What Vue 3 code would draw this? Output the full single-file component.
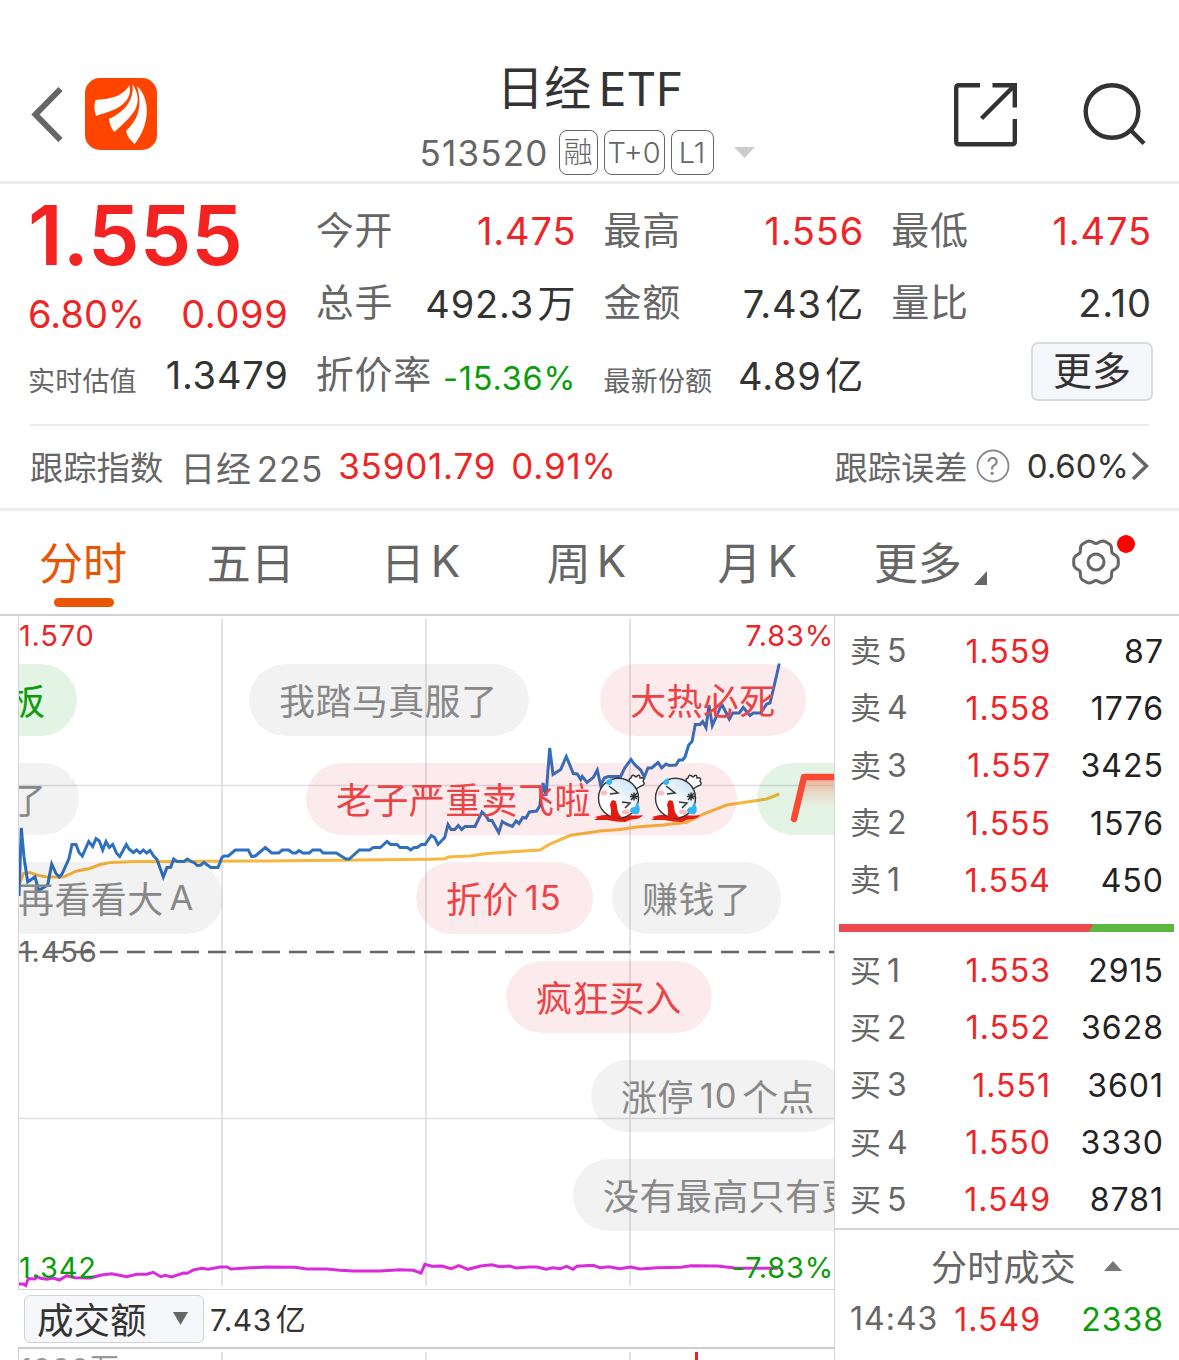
<template>
    <div class="page">
        <!-- Title bar -->
        <header class="header">
            <div class="header-left">
                <svg class="back" width="34" height="56" viewBox="0 0 34 56">
                    <path d="M30.500 3 L5.500 28.500 L30.500 54" fill="none" stroke="#666" stroke-width="6" />
                </svg>
                <svg class="logo" width="72" height="72" viewBox="0 0 72 72">
                    <rect width="72" height="72" rx="15" fill="#ff4400" />
                    <g fill="#fff">
                        <path d="M10.5 22 C24 21 38 19 44.3 7 C46 15 44 20 40 24 C33 32 22 34 11 38 C9 32 9 27 10.5 22 Z" />
                        <path d="M47.5 6 C54 16 54 24 50 32 C45 40 36 48 29.3 54 C26 50 24.5 46 24 41 C34 36 50 26 47.5 6 Z" />
                        <path d="M52 8 C66 21 65 47 49.7 66 C45 62 42 58 41 53 C55 40 57 26 52 8 Z" />
                    </g>
                </svg>
            </div>
            <div class="header-title">
                <h1><span class="name">日经</span><span>ETF</span></h1>
                <div class="code-line">
                    <span class="code">513520</span>
                    <span v-for="tag in tags" :key="tag.text" class="tag" :class="tag.kind">{{ tag.text }}</span>
                    <svg class="code-arrow" width="21" height="11" viewBox="0 0 21 11">
                        <path d="M0 0 H21 L10.500 11 Z" fill="#ccc" />
                    </svg>
                </div>
            </div>
            <div class="header-right">
                <svg width="64" height="64" viewBox="0 0 64 64" fill="none" stroke="#333" stroke-width="4.400">
                    <path d="M26 2.200 H5 Q2.200 2.200 2.200 5 V58.500 Q2.200 61.300 5 61.300 H58 Q60.800 61.300 60.800 58.500 V36" />
                    <path d="M38.500 2.200 H60.800 V24.500 M60 3 L27.500 35.500" />
                </svg>
                <svg width="64" height="64" viewBox="0 0 64 64" fill="none" stroke="#333" stroke-width="4.400">
                    <circle cx="29" cy="28.500" r="26.300" />
                    <path d="M47.500 47 L61 60.500" />
                </svg>
            </div>
        </header>

        <!-- Quote figures -->
        <section class="quote">
            <div class="quote-main">
                <div class="price">1.555</div>
                <div class="change"><span>6.80%</span><span class="amount-change">0.099</span></div>
                <div class="cell estimate"><span class="label small">实时估值</span><span class="value">1.3479</span></div>
            </div>
            <div v-for="(column, index) in quoteColumns" :key="index" class="quote-column">
                <div v-for="item in column" :key="item.label" class="cell">
                    <span class="label" :class="{ small: item.smallLabel }">{{ item.label }}</span>
                    <span class="value" :class="item.tone">{{ item.value }}<i v-if="item.unit">{{ item.unit }}</i></span>
                </div>
                <button v-if="index === 2" class="more">更多</button>
            </div>
        </section>

        <!-- Tracked index -->
        <section class="tracking">
            <span class="track-label">跟踪指数</span>
            <span class="track-name">日经<i>225</i></span>
            <span class="track-value">35901.79</span>
            <span class="track-value percent">0.91%</span>
            <span class="track-label error">跟踪误差</span>
            <svg class="help" width="34" height="34" viewBox="0 0 34 34">
                <circle cx="17" cy="17" r="15.500" fill="none" stroke="#888" stroke-width="1.800" />
                <text x="17" y="25.500" text-anchor="middle" font-size="24" fill="#888">?</text>
            </svg>
            <span class="track-error">0.60%</span>
            <svg class="chevron" width="18" height="30" viewBox="0 0 18 30">
                <path d="M2 2 L15.500 15 L2 28" fill="none" stroke="#666" stroke-width="3.600" />
            </svg>
        </section>

        <!-- Period tabs -->
        <nav class="tabs">
            <button v-for="(tab, index) in tabs" :key="tab.text" :class="{ active: index === current }"
                @click="current = index">
                {{ tab.text }}<i v-if="tab.latin">{{ tab.latin }}</i>
                <svg v-if="tab.menu" class="corner" width="13" height="14" viewBox="0 0 13 14">
                    <path d="M13 0 V14 H0 Z" fill="#666" />
                </svg>
            </button>
            <button aria-label="设置">
                <span class="gear">
                    <svg width="52" height="52" viewBox="-26 -26 52 52" fill="none" stroke="#666" stroke-width="3">
                        <path :d="gearPath" />
                        <circle r="8" />
                    </svg>
                    <span class="dot"></span>
                </span>
            </button>
        </nav>

        <main class="body">
            <div class="charts">
                <div class="chart">
                    <svg width="815" height="673" viewBox="19 616 815 673" fill="none">
                        <g stroke="#dedee4" stroke-width="1.700">
                            <path d="M222 619 V1286 M426 619 V1286 M630 619 V1286" />
                            <path d="M19 785.500 H834 M19 1118.500 H834" />
                        </g>
                        <path d="M19 952 H834" stroke="#666" stroke-width="2.700" stroke-dasharray="18 9" />
                        <polyline :points="averageLine" stroke="#f7b63c" stroke-width="3" />
                        <polyline :points="priceLine" stroke="#2f6fbf" stroke-width="3" />
                        <polyline :points="premiumLine" stroke="#d92bdc" stroke-width="3" />
                    </svg>
                    <span class="axis top left">1.570</span>
                    <span class="axis top right">7.83%</span>
                    <span class="axis middle left">1.456</span>
                    <span class="axis bottom left">1.342</span>
                    <span class="axis bottom right">-7.83%</span>

                    <!-- Floating comments -->
                    <div v-for="item in comments" :key="item.text" class="comment" :class="item.tone"
                        :style="{ left: item.x + 'px', top: item.row * 99 + 48 + 'px', width: item.width + 'px' }">
                        <span>{{ item.text }}</span><i v-if="item.latin">{{ item.latin }}</i><span v-if="item.tail">{{
                            item.tail }}</span>
                        <svg v-for="n in item.faces || 0" :key="n" class="face" width="57" height="50"
                            viewBox="0 0 57 50">
                            <path d="M3 44 Q12 41 20 42 L36 42 Q44 43 51 42 Q49 45 44 46 Q38 46 33 49 Q24 49 15 47 L2 47 Q7 45 3 44 Z"
                                fill="#e51b10" />
                            <g fill="#fff" stroke="#333" stroke-width="1.400">
                                <path d="M39 11 Q35 6 39 5 Q40 0 44 4 Q48 0 48 5 Q53 4 51 8 Q54 12 49 13 L44 16" />
                                <circle cx="26.500" cy="25.200" r="20" fill="url(#skin)" />
                            </g>
                            <ellipse cx="12" cy="20" rx="3.500" ry="2.500" fill="#f9bfc0" />
                            <ellipse cx="34" cy="39" rx="4" ry="2.500" fill="#f9bfc0" />
                            <path d="M17 13 L26 20 L18 21 M30 29 L38 30 L33 35 M39 21 L45 26 M45 20 L39 27 M38 23.500 H46 M42 19.500 V27.500"
                                fill="none" stroke="#333" stroke-width="1.500" />
                            <path d="M18 32 Q19 25 24 28.500 L25 33 Q25 41 31 45 L18 46 Q20 38 18 32 Z" fill="#e51b10" />
                            <path d="M19 5 Q22 10 18 12 Q13 12 14 8 Z M45 29 Q50 37 46 41 Q40 42 38 38 Q38 34 43 34 Z"
                                fill="#35b4f0" />
                        </svg>
                        <svg v-if="item.sign" width="60" height="56" viewBox="0 0 60 56">
                            <path d="M15 8 H60 V36 L15 40 Z" fill="url(#glow)" />
                            <path d="M7 49 L17 7 H60" fill="none" stroke="#fa4a33" stroke-width="6.500"
                                stroke-linecap="round" stroke-linejoin="round" />
                        </svg>
                    </div>
                    <svg class="defs" width="0" height="0">
                        <defs>
                            <linearGradient id="skin" x1="0.900" y1="0" x2="0.450" y2="0.600">
                                <stop offset="0" stop-color="#c2dff2" />
                                <stop offset="1" stop-color="#fff" />
                            </linearGradient>
                            <linearGradient id="glow" x1="0" y1="0" x2="0" y2="1">
                                <stop offset="0" stop-color="#f08a70" stop-opacity="0.700" />
                                <stop offset="1" stop-color="#f0d0b8" stop-opacity="0" />
                            </linearGradient>
                        </defs>
                    </svg>
                </div>
                <div class="indicator">
                    <button class="select">成交额
                        <svg width="15" height="13" viewBox="0 0 15 13">
                            <path d="M0 0 H15 L7.500 13 Z" fill="#666" />
                        </svg>
                    </button>
                    <span class="amount">7.43<i>亿</i></span>
                </div>
                <div class="volume">
                    <svg width="815" height="11" viewBox="19 1349 815 11">
                        <path d="M222 1352 V1360 M426 1352 V1360 M630 1352 V1360" stroke="#dedee4" stroke-width="1.700" />
                        <path d="M696.500 1352 V1360" stroke="#ee2222" stroke-width="3" />
                    </svg>
                    <span class="axis volume-label">1000<i>万</i></span>
                </div>
            </div>

            <!-- Order book -->
            <aside class="book">
                <div class="levels">
                    <div v-for="row in asks" :key="row[0]" class="level">
                        <span class="side">卖<i>{{ row[0] }}</i></span>
                        <span class="level-price">{{ row[1] }}</span>
                        <span class="lots">{{ row[2] }}</span>
                    </div>
                </div>
                <div class="ratio">
                    <span class="ratio-sell"></span>
                </div>
                <div class="levels">
                    <div v-for="row in bids" :key="row[0]" class="level">
                        <span class="side">买<i>{{ row[0] }}</i></span>
                        <span class="level-price">{{ row[1] }}</span>
                        <span class="lots">{{ row[2] }}</span>
                    </div>
                </div>
                <div class="deals">
                    <div class="deals-title">分时成交
                        <svg width="18" height="10" viewBox="0 0 18 10">
                            <path d="M0 10 L9 0 L18 10 Z" fill="#777" />
                        </svg>
                    </div>
                    <div class="level deal">
                        <span class="side">14:43</span>
                        <span class="level-price">1.549</span>
                        <span class="lots green">2338</span>
                    </div>
                </div>
            </aside>
        </main>
    </div>
</template>

<script setup>
import { ref } from 'vue'

const current = ref(0)

const tags = [
    { text: '融', kind: 'cjk' },
    { text: 'T+0', kind: 'wide' },
    { text: 'L1', kind: 'narrow' }
]

const quoteColumns = [
    [
        { label: '今开', value: '1.475', tone: 'red' },
        { label: '总手', value: '492.3', unit: '万' },
        { label: '折价率', value: '-15.36%', tone: 'green compact' }
    ],
    [
        { label: '最高', value: '1.556', tone: 'red' },
        { label: '金额', value: '7.43', unit: '亿' },
        { label: '最新份额', value: '4.89', unit: '亿', smallLabel: true }
    ],
    [
        { label: '最低', value: '1.475', tone: 'red' },
        { label: '量比', value: '2.10' }
    ]
]

const tabs = [
    { text: '分时' },
    { text: '五日' },
    { text: '日', latin: 'K' },
    { text: '周', latin: 'K' },
    { text: '月', latin: 'K' },
    { text: '更多', menu: true }
]

// x is relative to the left edge of the plot
const comments = [
    { text: '板', x: -40, row: 0, width: 98, tone: 'green-tone' },
    { text: '我踏马真服了', x: 230, row: 0, width: 280 },
    { text: '大热必死', x: 581, row: 0, width: 206, tone: 'red-tone' },
    { text: '了', x: -39, row: 1, width: 99 },
    { text: '老子严重卖飞啦', x: 287, row: 1, width: 431, tone: 'red-tone', faces: 2 },
    { text: '', x: 738, row: 1, width: 200, tone: 'green-tone', sign: true },
    { text: '再看看大', latin: 'A', x: -31, row: 2, width: 235 },
    { text: '折价', latin: '15', x: 397, row: 2, width: 177, tone: 'red-tone' },
    { text: '赚钱了', x: 593, row: 2, width: 169 },
    { text: '疯狂买入', x: 487, row: 3, width: 206, tone: 'red-tone' },
    { text: '涨停', latin: '10', tail: '个点', x: 572, row: 4, width: 252 },
    { text: '没有最高只有更高', x: 554, row: 5, width: 350 }
]

const asks = [
    [5, '1.559', 87],
    [4, '1.558', 1776],
    [3, '1.557', 3425],
    [2, '1.555', 1576],
    [1, '1.554', 450]
]

const bids = [
    [1, '1.553', 2915],
    [2, '1.552', 3628],
    [3, '1.551', 3601],
    [4, '1.550', 3330],
    [5, '1.549', 8781]
]

const priceLine = `19,896 21.3,828 24,857 27.7,882 35,877 38.7,890.5 47.7,885 51.7,864 56,873.5 59.3,877 62,874 69,858.5
72,844.5 76,844.5 79,852.5 82.3,856 88.7,841.5 92.7,846.5 96,838.5 99.3,841 102.7,850 106,841.5 109.3,847.5
112.7,844.5 116.7,853.5 119.7,856.5 126.3,844.5 129,849 133.3,852.5 136.7,850 140,853 143.3,850 146.7,853 150,850.5
153.7,856 157,859.5 163.3,877 167,867.5 170.7,867.3 173.7,859 177,861.5 184,861.5 187.3,859 191,861.5 194,862.5
197.3,865.5 200.7,865 204,862.5 210.7,867.5 218,867.5 222,857.5 224,856 228.3,856 235.3,850 248.3,850 251.7,856.5
255.3,856 265.3,847.5 271.7,853 278.7,853 282.3,850 288.7,850 292.7,853 296,853 299,850.5 302.7,853 309.3,853
312.7,850 320,850 323.3,853 336.3,853 346,859 349.3,859 359.3,850 369.7,850 373.3,847.5 380.3,847.5 387,841.5
390.7,844.5 397,844.5 400,847.5 407.3,847.5 410.7,850 414,847.5 417.3,847.5 421.3,844.5 425,844.5 431.3,835.5
434.7,837.5 438,844.5 444.7,837.5 448,824.5 451,829.5 454.7,829.5 458.3,825.5 461.7,829.5 465,826.5 475,826.5
482,812 486,816 488.7,820.5 492,820.5 498.7,832.5 502.3,821.5 505.3,823.5 512.3,826.5 516,821 519,823.5 522.7,817.5
526,818 529.3,812 536.7,811 539.7,806 543,783 546,796 549.7,748 553,774.5 560.7,769.5 566.3,756.5 573.3,773.5
577.3,774 580.7,779.5 582.3,776.5 587,782.5 593.3,777.5 597.3,770 600.7,785.5 604.3,778 608.3,776.5 620.7,776.5
624.7,768 631,759.5 635,765 640.7,770 644.3,777 648,768 651.7,768 658,762.5 661.7,768 666,764 669.3,765.5 676,765
679,760 682.7,760 685,757 688.7,745 692,741.5 695.3,724.5 700,724.5 702.7,721.5 706,727.5 709,705 712.3,725.5
717.7,713.5 721.7,704 729.3,719 732.7,713 739.3,713 743.3,707.5 750,715.5 753.3,713 760.7,713 766.7,704 770,703
774,686.5 779.3,663.5`

const averageLine = `20,883 23.3,873.5 30,872.5 36.7,875 46.7,877 63.3,877 76.7,871 90,868.5 100,864.5 110,862.5
133.3,861.5 166.7,861.5 266.7,861 333.3,860.3 430,859.3 445,858.7 448.3,857 470,856 486.7,853.5 540,850 550,844
570,835.5 600,831 620,829.5 636.7,827 663.3,825 686.7,822.3 703.3,814 726.7,805 750,801.5 766.7,799 779.3,794`

const premiumLine = `19,1284 23.3,1284 25.7,1285.5 28.3,1278.5 35,1279 37.3,1276.7 40.7,1278.3 46.7,1279.3 53.3,1278
59.3,1280 66.7,1275.7 75,1277.7 90,1278 101.7,1275 111.7,1273.7 126.7,1276.7 136.7,1274.3 146.7,1274.3 153.3,1272.3
160.7,1276.7 165,1275.3 171.7,1277 183.3,1273 187.3,1273.3 193.3,1270 201.7,1268.3 208.3,1269.3 220,1267 227.3,1267
230.7,1269 246.7,1268 266.7,1267 295,1267.3 306.7,1269 326.7,1269 340,1270.3 353.3,1271 380,1271 400,1269.7
413.3,1270.3 421,1273 424.8,1264.3 432,1266.3 442,1266 451,1268.7 459,1265.7 468,1269.3 480.5,1266 491.6,1264.7
500,1266.7 509.5,1266 516,1268 529,1267 537,1267 546,1269.3 553,1267.7 560,1268.7 566.7,1266.3 573,1269.3 577,1266.3
593,1265.3 600,1267.7 609,1266.7 619.4,1268.7 630.6,1267 640,1269 657,1267.7 681,1267.3 691,1265.7 717.7,1266
734.6,1268 778,1268.3`

// Six rounded teeth with flattened tips
const gearPath = 'M' + Array.from({ length: 120 }, (_, i) => {
    const angle = (i * Math.PI) / 60
    const radius = 21 + 1.9 * Math.cos(6 * angle) - 0.6 * Math.cos(12 * angle)
    return `${(radius * Math.cos(angle)).toFixed(2)} ${(radius * Math.sin(angle)).toFixed(2)}`
}).join(' L') + ' Z'
</script>

<style>
body {
    margin: 0;
    overflow: hidden;
    background: #fff;
}
</style>

<style scoped>
.page {
    width: 1179px;
    height: 1360px;
    overflow: hidden;
    font-family: Inter, "Noto Sans CJK SC", sans-serif;
    color: #333;
    white-space: nowrap;
    text-autospace: no-autospace;
}

.page * {
    box-sizing: border-box;
}

i {
    font-style: normal;
}

svg {
    display: block;
    flex-shrink: 0;
}

button {
    margin: 0;
    padding: 0;
    border: none;
    background: none;
    font-family: inherit;
    color: inherit;
    cursor: pointer;
}

.red {
    color: #ee2426;
}

.green {
    color: #0a9c0a;
}

/* Header */
.header {
    display: flex;
    justify-content: space-between;
    height: 184px;
    padding: 0 32px 0 30px;
    border-bottom: 3px solid #ececec;
}

.header-left {
    display: flex;
    align-items: center;
    gap: 21px;
    width: 300px;
    padding-top: 47px;
}

.header-title {
    padding-top: 59px;
    width: 338px;
}

.header-right {
    display: flex;
    align-items: center;
    justify-content: flex-end;
    gap: 65px;
    width: 300px;
    padding-top: 49px;
}

h1 {
    display: flex;
    justify-content: center;
    gap: 7px;
    margin: 0;
    padding-left: 3px;
    font-size: 46px;
    line-height: 60px;
    font-weight: 400;
}

.name {
    margin-top: -1px;
    font-size: 47px;
    letter-spacing: 0.5px;
}

.code-line {
    display: flex;
    align-items: center;
    height: 67px;
    color: #666;
}

.code {
    width: 139px;
    font-size: 35px;
    letter-spacing: 1.200px;
}

.tag {
    height: 45px;
    margin-right: 6px;
    border: 1.500px solid #666;
    border-radius: 8px;
    font-size: 29px;
    line-height: 43px;
    text-align: center;
    font-weight: 300;
}

.tag.cjk {
    width: 39px;
}

.tag.wide {
    width: 61px;
}

.tag.narrow {
    width: 43px;
}

.code-arrow {
    margin-left: 14px;
}

/* Quote */
.quote {
    display: grid;
    grid-template-columns: repeat(4, 1fr);
    gap: 28px;
    height: 240px;
    padding: 11px 28px 0;
    line-height: 40px;
}

.price {
    height: 81px;
    font-size: 82px;
    line-height: 81px;
    font-weight: 600;
    color: #f52222;
}

.change {
    display: flex;
    justify-content: space-between;
    height: 76px;
    font-size: 38px;
    line-height: 76px;
    color: #ee2426;
}

.amount-change {
    margin-right: -0.600px;
    letter-spacing: 0.600px;
}

.cell {
    display: flex;
    align-items: center;
    justify-content: space-between;
    height: 72px;
}

.estimate {
    height: 46px;
}

.label {
    padding-bottom: 3px;
    font-size: 38px;
    letter-spacing: 0.700px;
    color: #666;
}

.label.small {
    padding: 14px 0 0;
    font-size: 27px;
    letter-spacing: 0.200px;
}

.value {
    margin-right: -0.800px;
    font-size: 38px;
    letter-spacing: 0.800px;
}

.value i {
    margin-left: 3.500px;
    vertical-align: 1px;
}

.value.compact {
    padding-top: 8px;
    font-size: 32.500px;
}

.more {
    display: block;
    width: 122px;
    height: 59px;
    margin: 3px -2px 0 auto;
    padding-bottom: 2px;
    border: 2px solid #dadcdf;
    border-radius: 7px;
    background: #f6f7fa;
    font-size: 39px;
    line-height: 53px;
}

/* Tracked index */
.tracking {
    display: flex;
    align-items: center;
    height: 87px;
    padding: 0 30px;
    border-bottom: 3px solid #ececec;
    font-size: 35px;
    letter-spacing: 0.800px;
    position: relative;
}

.tracking::before {
    content: "";
    position: absolute;
    top: 0;
    left: 30px;
    right: 30px;
    height: 2px;
    background: #ececec;
}

.track-label {
    padding-bottom: 2px;
    font-size: 33.300px;
    letter-spacing: 0;
}

.track-label,
.track-name {
    color: #666;
}

.track-name {
    margin-left: 17px;
}

.track-name i {
    margin-left: 5px;
}

.track-value {
    margin-left: 15px;
    color: #ee2426;
}

.error {
    margin-left: auto;
}

.help {
    margin: 0 17px 0 8px;
}

.track-error {
    font-size: 33px;
    letter-spacing: 0;
}

.chevron {
    margin-left: 2px;
}

/* Tabs */
.tabs {
    display: flex;
    height: 105px;
    border-bottom: 2px solid #d2d2d2;
}

.tabs button {
    position: relative;
    display: flex;
    flex: 1;
    align-items: center;
    justify-content: center;
    padding-bottom: 4px;
    font-size: 44px;
    color: #666;
}

.tabs button:nth-child(1) {
    padding-right: 2px;
}

.tabs button:nth-child(2) {
    padding-right: 4px;
}

.tabs button:nth-child(5) {
    padding-left: 5px;
}

.tabs button:nth-child(6) {
    padding-left: 7px;
}

.tabs button.active {
    color: #ea5504;
}

.tabs button.active::after {
    content: "";
    position: absolute;
    left: 54px;
    bottom: 7px;
    width: 60px;
    height: 9px;
    border-radius: 5px;
    background: #ea5504;
}

.tabs i {
    margin-left: 6px;
}

.corner {
    margin: 34px 0 0 12px;
}

.gear {
    position: relative;
    margin-top: 2px;
}

.dot {
    position: absolute;
    top: -1px;
    right: -13px;
    width: 18px;
    height: 18px;
    border-radius: 50%;
    background: #f00;
}

/* Charts */
.body {
    display: flex;
    height: 744px;
}

.charts {
    width: 835px;
    padding-left: 18px;
    border-right: 1px solid #d4d4d8;
}

.chart {
    position: relative;
    height: 674px;
    overflow: hidden;
    border-left: 1px solid #d4d4d8;
    border-bottom: 1px solid #d4d4d8;
}

.axis {
    position: absolute;
    font-size: 29px;
    line-height: 32px;
    letter-spacing: 0.800px;
    color: #666;
}

.axis.left {
    left: 0;
}

.axis.right {
    right: 0;
}

.axis.top {
    top: 4px;
    color: #e8262a;
}

.axis.middle {
    top: 320px;
}

.axis.bottom {
    top: 636px;
    color: #0a9c0a;
}

.comment {
    position: absolute;
    display: flex;
    align-items: center;
    height: 72px;
    padding: 0 30px 3px;
    border-radius: 36px;
    background: rgba(0, 0, 0, 0.050);
    font-size: 36px;
    letter-spacing: 0.400px;
    color: #888;
}

.comment i {
    margin: 2px 5px 0 6px;
    font-size: 34.500px;
    letter-spacing: 0.800px;
}

.red-tone {
    background: rgba(220, 45, 50, 0.095);
    color: #ec4347;
}

.green-tone {
    background: rgba(10, 160, 20, 0.115);
    color: #0a9c0a;
}

.face {
    margin: 0;
    transform: translateX(1px);
}

.defs {
    position: absolute;
}

.indicator {
    display: flex;
    align-items: center;
    height: 59px;
    padding-left: 6px;
    border-bottom: 2px solid #ccc;
}

.select {
    display: flex;
    align-items: center;
    justify-content: space-between;
    width: 180px;
    height: 48px;
    padding: 0 15px 1px 12px;
    border: 1.500px solid #d0d2d6;
    border-radius: 6px;
    background: #f6f7fa;
    font-size: 36.500px;
}

.amount {
    margin-left: 6px;
    padding-bottom: 3px;
    font-size: 30px;
    letter-spacing: 0.500px;
}

.amount i {
    margin-left: 4px;
    vertical-align: 1px;
}

.volume {
    position: relative;
    height: 11px;
    border-left: 1px solid #d4d4d8;
}

.volume-label {
    top: 4px;
    left: 1px;
    color: #999;
}

/* Order book */
.book {
    flex: 1;
    padding-top: 7px;
    font-size: 32px;
}

.levels {
    padding: 0 15px;
}

.level {
    display: flex;
    align-items: center;
    height: 57.300px;
    line-height: 40px;
    letter-spacing: 1px;
}

.side {
    width: 88px;
    padding-bottom: 1px;
    font-size: 31px;
    letter-spacing: 0;
    color: #666;
}

.side i {
    margin-left: 6px;
    font-size: 32px;
}

.level-price {
    width: 113px;
    text-align: right;
    color: #ee2426;
}

.lots {
    flex: 1;
    text-align: right;
    color: #222;
}

.lots.green {
    color: #0a9c0a;
}

.ratio {
    height: 8px;
    margin: 14.500px 5px 10.500px 4px;
    background: #5cb843;
}

.ratio-sell {
    display: block;
    width: 76%;
    height: 100%;
    background: #ec4a4c;
    clip-path: polygon(0 0, 100% 0, 98% 100%, 0 100%);
}

.deals {
    margin-top: -1px;
    padding: 0 15px;
    border-top: 2px solid #d4d4d8;
}

.deals-title {
    display: flex;
    align-items: center;
    justify-content: center;
    gap: 28px;
    height: 73px;
    padding: 0 0 3px 39px;
    font-size: 36px;
    letter-spacing: 0.300px;
    color: #666;
}

.deals-title svg {
    margin-top: 3px;
}

.deal {
    height: 34px;
}

.deal .side {
    font-size: 32px;
    letter-spacing: 1px;
}

.deal .level-price {
    width: 103px;
}
</style>
